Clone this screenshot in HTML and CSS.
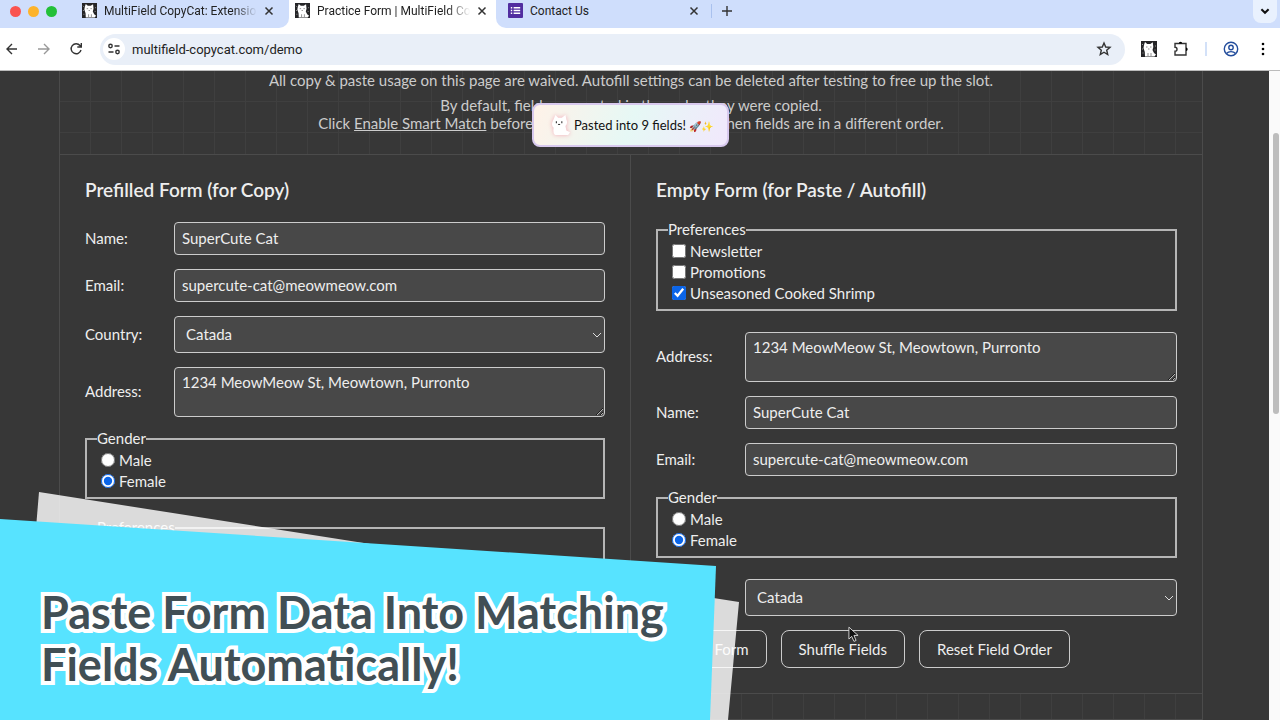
FILE: index.html
```
<!DOCTYPE html>
<html lang="en">
<head>
	<meta charset="UTF-8">
	<title>Practice Form | MultiField CopyCat</title>
	<link rel="stylesheet" href="styles.css">
</head>
<body>
	<svg class="defs" aria-hidden="true">
		<symbol id="cat" viewBox="0 0 16 16">
			<rect width="16" height="16" fill="#252527"/>
			<path d="M4 1L6.200 3H9.300L11.800 1.200L12.300 6L11.500 9L13 12L15 13.500L13.500 15.500H4L3.800 11L2.500 7L3 4Z" fill="#fff"/>
			<path d="M5 6h1.500M9 6h1.500M7 8h1.500M7 12v3M10 12v3" stroke="#777" stroke-width=".8"/>
			<path d="M1 3l1 1M1 8h1M1.500 12h1M14 5h1M13.500 9h1" stroke="#999"/>
		</symbol>
		<symbol id="close" viewBox="0 0 10 10">
			<path d="M1.500 1.500l7 7M8.500 1.500l-7 7" stroke="currentColor" stroke-width="1.500" fill="none"/>
		</symbol>
	</svg>
	<div class="browser">
		<header>
			<div class="tabs">
				<div class="lights"><i class="red"></i><i class="yellow"></i><i class="green"></i></div>
				<div class="tab first">
					<svg class="favicon"><use href="#cat"/></svg>
					<span class="tabtitle fade">MultiField CopyCat: Extension</span>
					<button class="closetab" aria-label="Close tab"><svg><use href="#close"/></svg></button>
				</div>
				<div class="tab active">
					<svg class="favicon"><use href="#cat"/></svg>
					<span class="tabtitle fade">Practice Form | MultiField CopyCat</span>
					<button class="closetab" aria-label="Close tab"><svg><use href="#close"/></svg></button>
				</div>
				<div class="tab last">
					<svg class="favicon" viewBox="0 0 16 16"><rect width="16" height="16" rx="1" fill="#512da0"/><path d="M3 5h1.500M6 5h7M3 8h1.500M6 8h7M3 11h1.500M6 11h7" stroke="#fff" stroke-width="1.500"/></svg>
					<span class="tabtitle">Contact Us</span>
					<button class="closetab" aria-label="Close tab"><svg><use href="#close"/></svg></button>
				</div>
				<button class="newtab" aria-label="New tab"><svg viewBox="0 0 12 12"><path d="M6 1v10M1 6h10" stroke="#333" stroke-width="1.400"/></svg></button>
				<button class="tabsearch" aria-label="Search tabs"><svg viewBox="0 0 10 10"><path d="M2 3.500l3 3 3-3" stroke="#111" stroke-width="1.700" fill="none"/></svg></button>
			</div>
			<div class="toolbar">
				<button aria-label="Back"><svg viewBox="0 0 16 16"><path d="M13 8H3M8 3L3 8l5 5" class="line"/></svg></button>
				<button class="disabled" aria-label="Forward"><svg viewBox="0 0 16 16"><path d="M2 8h11M8 3l5 5-5 5" class="line"/></svg></button>
				<button aria-label="Reload"><svg viewBox="0 0 16 16"><path d="M13 9A5 5 0 1 1 12 4.500L13.300 6M13.300 2v4h-4" class="line"/></svg></button>
				<div class="addressbar">
					<button class="siteinfo" aria-label="Site information"><svg viewBox="0 0 16 16"><path d="M8.500 5h5M2.500 11h5" class="line"/><circle cx="4.500" cy="5" r="1.700" class="line"/><circle cx="11.500" cy="11" r="1.700" class="line"/></svg></button>
					<input class="url" type="text" aria-label="Address" value="multifield-copycat.com/demo">
					<button aria-label="Bookmark"><svg viewBox="0 0 16 16"><path d="M8 2l1.700 4 4.300.4-3.300 2.800 1 4.300L8 11.200l-3.700 2.300 1-4.300L2 6.400 6.300 6z" class="line"/></svg></button>
				</div>
				<div class="tools">
					<button aria-label="MultiField CopyCat"><svg><use href="#cat"/></svg></button>
					<button aria-label="Extensions"><svg viewBox="0 0 16 16"><path d="M2 2.500h11v11.500H2v-3.700a2 2 0 0 0 0-4z" class="line"/><path d="M5.800 2.500a1.700 1.700 0 0 1 3.400 0zM13 6.500a1.700 1.700 0 0 1 0 3.400z"/></svg></button>
					<span class="divider"></span>
					<button class="profile" aria-label="Profile"><svg viewBox="0 0 16 16"><circle cx="8" cy="8" r="6.700" class="line"/><circle cx="8" cy="6.500" r="2.200" class="line"/><path d="M3.500 12.500c2-2.500 7-2.500 9 0" class="line"/></svg></button>
					<button aria-label="Menu"><svg viewBox="0 0 16 16"><circle cx="8" cy="3" r="1.300"/><circle cx="8" cy="8" r="1.300"/><circle cx="8" cy="13" r="1.300"/></svg></button>
				</div>
			</div>
		</header>
		<div class="viewport">
			<main>
				<section class="intro">
					<p>All copy &amp; paste usage on this page are waived. Autofill settings can be deleted after testing to free up the slot.</p>
					<p>By default, fields are pasted in the order they were copied.<br>Click <a href="#">Enable Smart Match</a> before pasting to match the fields when fields are in a different order.</p>
				</section>
				<div class="forms">
					<form class="panel">
						<h2>Prefilled Form (for Copy)</h2>
						<div class="row"><label for="name1">Name:</label><input id="name1" type="text" value="SuperCute Cat"></div>
						<div class="row"><label for="email1">Email:</label><input id="email1" type="text" value="supercute-cat@meowmeow.com"></div>
						<div class="row"><label for="country1">Country:</label><select id="country1"><option>Catada</option></select></div>
						<div class="row"><label for="address1">Address:</label><textarea id="address1">1234 MeowMeow St, Meowtown, Purronto</textarea></div>
						<fieldset>
							<legend>Gender</legend>
							<label><input type="radio" name="gender1">Male</label>
							<label><input type="radio" name="gender1" checked>Female</label>
						</fieldset>
						<fieldset>
							<legend>Preferences</legend>
							<label><input type="checkbox">Newsletter</label>
							<label><input type="checkbox">Promotions</label>
							<label><input type="checkbox" checked>Unseasoned Cooked Shrimp</label>
						</fieldset>
					</form>
					<form class="panel">
						<h2>Empty Form (for Paste / Autofill)</h2>
						<fieldset>
							<legend>Preferences</legend>
							<label><input type="checkbox">Newsletter</label>
							<label><input type="checkbox">Promotions</label>
							<label><input type="checkbox" checked>Unseasoned Cooked Shrimp</label>
						</fieldset>
						<div class="row"><label for="address2">Address:</label><textarea id="address2">1234 MeowMeow St, Meowtown, Purronto</textarea></div>
						<div class="row"><label for="name2">Name:</label><input id="name2" type="text" value="SuperCute Cat"></div>
						<div class="row"><label for="email2">Email:</label><input id="email2" type="text" value="supercute-cat@meowmeow.com"></div>
						<fieldset>
							<legend>Gender</legend>
							<label><input type="radio" name="gender2">Male</label>
							<label><input type="radio" name="gender2" checked>Female</label>
						</fieldset>
						<div class="row"><label for="country2">Country:</label><select id="country2"><option>Catada</option></select></div>
						<div class="buttons">
							<button type="reset">Reset Form</button>
							<button type="button">Shuffle Fields</button>
							<button type="button">Reset Field Order</button>
						</div>
					</form>
				</div>
				<div class="after"></div>
			</main>
			<div class="scrollbar"><div class="thumb"></div></div>
		</div>
	</div>
	<div class="toast" role="status">
		<svg viewBox="0 0 22 24"><path d="M6 1L9 4h4l4-3 1 5q2 4-1 7l1 5 4 2-2 3H6q-3-1-2-8-3-3-1-7z" fill="#fff"/><path d="M7 8v2M13 8v2M9 11q1 1 2 0" stroke="#333" stroke-width="1.200" fill="none"/></svg>
		<span>Pasted into 9 fields! <span class="emoji">🚀✨</span></span>
	</div>
	<svg class="cursor" viewBox="0 0 12 18"><path d="M1 1v13l3-3 2.500 5.500 2.300-1L6.500 10H11z" fill="#111" stroke="#ddd"/></svg>
	<div class="banner">
		<svg viewBox="0 0 740 230" preserveAspectRatio="none" aria-hidden="true">
			<path d="M39 2L739 112L728 230H20z" fill="#fff" fill-opacity=".82"/>
			<path d="M0 29L716 76L710 230H0z" fill="#57e3ff"/>
		</svg>
		<h1>Paste Form Data Into Matching<br>Fields Automatically!</h1>
	</div>
</body>
</html>
```
FILE: styles.css
```
*{
	box-sizing: border-box;
}
body{
	margin: 0;
	background: #373737;
	font-family: Lato, "Noto Sans", sans-serif;
	font-size: 15px;
	color: #eee;
	overflow: hidden;
}
button{
	font: inherit;
	border: 0;
	padding: 0;
	background: none;
}
.defs{
	position: absolute;
	width: 0;
	height: 0;
}
.browser{
	display: flex;
	flex-direction: column;
	height: 100vh;
}
header{
	flex: none;
	background: #fff;
	font-family: Roboto, sans-serif;
	color: #222;
}
/* the white strip shows through the rounded bottom corners next to the active tab */
.tabs{
	display: flex;
	height: 28px;
	background: linear-gradient(to right, #cfdefc 270px, #fff 270px, #fff 510px, #cfdefc 510px);
}
.lights{
	display: flex;
	gap: 7px;
	width: 72px;
	padding: 6px 0 0 10px;
}
.lights i{
	width: 11px;
	height: 11px;
	border-radius: 50%;
}
.red{
	background: #fa5350;
}
.yellow{
	background: #fdb32b;
}
.green{
	background: #23c038;
}
.tab{
	display: flex;
	align-items: center;
	gap: 7px;
	width: 207px;
	padding: 0 9px 7px 6px;
	font-size: 12px;
}
.tab.first{
	width: 217px;
	padding: 0 15px 7px 10px;
	border-radius: 0 0 10px 0;
}
.tab.last{
	width: 223px;
	padding: 0 20px 7px 12px;
	border-radius: 0 0 0 10px;
}
.tab.first, .tab.last{
	background: #cfdefc;
}
.tabs .active{
	background: #fff;
}
.favicon{
	flex: none;
	width: 15px;
	height: 15px;
}
.tabtitle{
	flex: 1;
	overflow: hidden;
	white-space: nowrap;
}
.fade{
	mask-image: linear-gradient(to right, #000 85%, transparent);
}
.closetab{
	display: flex;
	color: #333;
}
.closetab svg{
	width: 10px;
	height: 10px;
}
.newtab{
	display: flex;
	align-items: center;
	height: 14px;
	margin: 4px 0 0 -8px;
	padding-left: 9px;
	border-left: 1px solid #a9c1ee;
}
.newtab svg{
	width: 12px;
	height: 12px;
}
.tabsearch{
	width: 24px;
	height: 23px;
	margin: 0 3px 0 auto;
	border-radius: 0 0 8px 8px;
	background: #e9f1fe;
}
.tabsearch svg{
	width: 12px;
	height: 12px;
}
.toolbar{
	display: flex;
	align-items: center;
	height: 43px;
	padding: 0 9px 0 4px;
	gap: 16px;
	border-bottom: 1px solid #bbb;
}
.toolbar button{
	display: flex;
	color: #333;
}
.toolbar svg{
	width: 16px;
	height: 16px;
}
.line{
	fill: none;
	stroke: currentColor;
	stroke-width: 1.4;
}
.toolbar .disabled{
	color: #999;
}
.addressbar{
	display: flex;
	align-items: center;
	flex: 1;
	height: 31px;
	padding: 0 13px 0 3px;
	border-radius: 16px;
	background: #e9eff8;
}
.siteinfo{
	padding: 3px;
	border-radius: 50%;
	background: #fff;
}
.url{
	flex: 1;
	border: 0;
	margin-left: 5px;
	background: none;
	font: 13px Roboto, sans-serif;
	color: #222;
}
.tools{
	display: flex;
	align-items: center;
	gap: 16px;
}
.divider{
	width: 2px;
	height: 14px;
	background: #d3e1f8;
}
.toolbar .profile{
	color: #234d9c;
}
.viewport{
	display: flex;
	flex: 1;
	min-height: 0;
	overflow: hidden;
}
main{
	flex: 1;
	display: grid;
	grid-template-rows: auto auto 1fr;
	grid-template-columns: 59px 1fr 66px;
}
main > *{
	grid-column: 2;
	border: 1px solid #4b4b4b;
	border-top: 0;
}
/* faint grid behind the text areas */
.intro, .after{
	background-image: linear-gradient(to right, transparent 30px, #3f3f3f 30px), linear-gradient(to bottom, transparent 30px, #3f3f3f 30px);
	background-size: 31px 31px;
}
.intro{
	height: 84px;
	line-height: 18px;
	text-align: center;
	color: #ccc;
}
.intro p{
	margin: 0 0 7px;
}
.intro a{
	color: inherit;
}
.forms{
	display: grid;
	grid-template-columns: 1fr 1fr;
}
.panel{
	display: flex;
	flex-direction: column;
	gap: 14px;
	height: 538px;
	padding: 24px 25px;
	overflow: hidden;
}
.panel:first-child{
	border-right: 1px solid #4b4b4b;
}
.panel h2{
	margin: 0 0 7px;
	font-size: 19px;
	line-height: 22px;
	font-weight: 600;
}
.row{
	display: flex;
	align-items: center;
}
.row > label{
	width: 89px;
	padding-bottom: 2px;
}
.row input, textarea, select{
	flex: 1;
	min-width: 0;
	height: 33px;
	padding: 0 7px 2px;
	border: 1px solid #ccc;
	border-radius: 4px;
	background: #484848;
	font: inherit;
	color: #eee;
}
.row textarea{
	height: 50px;
	padding: 5px 7px;
}
.row select{
	height: 37px;
	appearance: none;
	background: #484848 url("data:image/svg+xml,%3Csvg xmlns='http://www.w3.org/2000/svg' width='10' height='6'%3E%3Cpath d='M1 1l4 4 4-4' fill='none' stroke='%23ddd'/%3E%3C/svg%3E") no-repeat right 2px center;
	padding-left: 11px;
}
fieldset{
	margin: 0 0 7px;
	padding: 3px 10px 6px;
	border: 2px solid #b5b5b5;
}
legend{
	padding: 0;
	line-height: 15px;
}
fieldset label{
	display: flex;
	align-items: center;
	gap: 4px;
	height: 21px;
}
fieldset input{
	width: 14px;
	height: 14px;
	margin: 0 0 0 4px;
	accent-color: #0b65e8;
}
.buttons{
	display: flex;
	gap: 14px;
}
.buttons button{
	height: 38px;
	padding: 0 17px;
	border: 1px solid #ccc;
	border-radius: 8px;
	color: #eee;
}
.scrollbar{
	width: 11px;
	padding: 62px 1px 0 4px;
	background: #fafafa;
}
.thumb{
	height: 281px;
	border-radius: 4px;
	background: #bdbdbd;
}
.toast{
	position: absolute;
	top: 103px;
	left: 532px;
	display: flex;
	align-items: center;
	gap: 4px;
	height: 44px;
	padding: 0 14px 0 16px;
	border: 2px solid #d8c9ee;
	border-radius: 8px;
	background: linear-gradient(110deg, #fff2e8, #e6f8f5 50%, #f1e8fc);
	color: #111;
	font-size: 13px;
	white-space: nowrap;
}
.toast svg{
	width: 20px;
	height: 24px;
	filter: drop-shadow(0 0 2px #f2aab8);
}
.emoji{
	font-size: 10px;
}
.cursor{
	position: absolute;
	left: 848px;
	top: 626px;
	width: 11px;
	height: 17px;
}
.banner{
	position: absolute;
	left: 0;
	bottom: 0;
	width: 740px;
	height: 230px;
}
.banner svg{
	position: absolute;
	width: 100%;
	height: 100%;
}
.banner h1{
	position: relative;
	margin: 0;
	padding: 96px 0 0 41px;
	font-size: 45px;
	line-height: 52px;
	color: #414f55;
	-webkit-text-stroke: 8px #fff;
	paint-order: stroke fill;
	stroke-linejoin: round;
	white-space: nowrap;
}
```
